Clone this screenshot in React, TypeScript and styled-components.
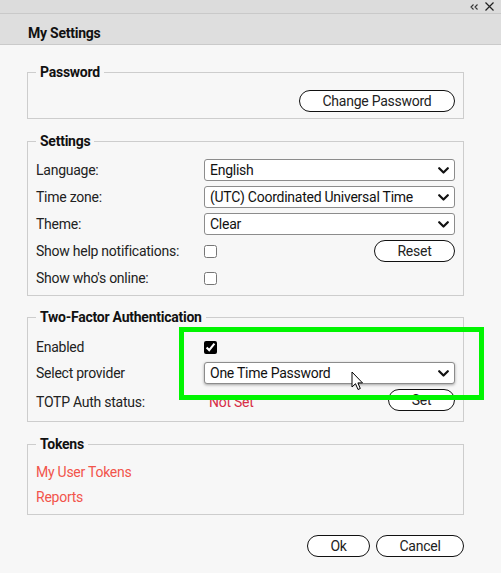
import React from "react";
import styled, { createGlobalStyle } from "styled-components";

const GlobalStyle = createGlobalStyle`
  html, body { margin: 0; padding: 0; background: #f7f7f7; }
  body { font-family: Roboto, "Noto Sans", Arial, sans-serif; }
  * { box-sizing: border-box; }
`;

const Window = styled.div`
  position: relative;
  width: 501px;
  height: 573px;
  overflow: hidden;
  background: #f7f7f7;
  color: #222;
  font-size: 14px;
  letter-spacing: -0.25px;
`;

const TopBar = styled.div`
  height: 14px;
  background: #dcdcdc;
  border-bottom: 1px solid #c9c9c9;
  display: flex;
  justify-content: flex-end;
  align-items: center;
  gap: 7px;
  padding-right: 7px;
`;

const Header = styled.div`
  height: 31px;
  background: #dedede;
  border-bottom: 1px solid #cacaca;
  padding: 11px 0 0 28px;
  font-weight: 700;
  font-size: 14px;
  line-height: 16px;
  color: #111;
`;

const Content = styled.div`
  padding: 19px 37px 0 27px;
  display: flex;
  flex-direction: column;
`;

const Group = styled.fieldset<{ $pt?: number; $pb?: number; $mt?: number }>`
  margin: ${(p) => p.$mt ?? 0}px 0 0 0;
  min-width: 0;
  border: 1px solid #cdcdcd;
  padding: ${(p) => p.$pt ?? 10}px 8px ${(p) => p.$pb ?? 6}px 8px;
`;

const Legend = styled.legend`
  padding: 0 4px;
  font-weight: 700;
  font-size: 14px;
  line-height: 16px;
  color: #111;
`;

const RightRow = styled.div`
  display: flex;
  justify-content: flex-end;
`;

const Rows = styled.div<{ $gap?: number }>`
  display: flex;
  flex-direction: column;
  gap: ${(p) => p.$gap ?? 5}px;
`;

const Row = styled.div<{ $mt?: number }>`
  display: grid;
  grid-template-columns: 168px 1fr;
  align-items: center;
  min-height: 22px;
  margin-top: ${(p) => p.$mt ?? 0}px;
`;

const Label = styled.span<{ $dy?: number }>`
  font-size: 14px;
  line-height: 16px;
  color: #222;
  padding-top: ${(p) => p.$dy ?? 0}px;
`;

const Cell = styled.div`
  display: flex;
  align-items: center;
  justify-content: space-between;
  min-width: 0;
`;

const SelectWrap = styled.div`
  position: relative;
  width: 100%;
`;

const Select = styled.select<{ $shadow?: boolean }>`
  appearance: none;
  -webkit-appearance: none;
  width: 100%;
  height: 22px;
  border: 1px solid #8c8c8c;
  border-radius: 3px;
  background: #fff;
  padding: 0 24px 0 5px;
  font-family: Roboto, "Noto Sans", Arial, sans-serif;
  font-size: 14px;
  letter-spacing: -0.25px;
  color: #111;
  box-shadow: ${(p) => (p.$shadow ? "0 1px 3px rgba(0,0,0,0.35)" : "none")};
  outline: none;
`;

const Chevron = styled.svg`
  position: absolute;
  right: 6px;
  top: 8px;
  pointer-events: none;
`;

const Check = styled.input.attrs({ type: "checkbox" })`
  margin: 0;
  width: 13px;
  height: 13px;
  accent-color: #000;
`;

const Pill = styled.button<{ $w: number }>`
  width: ${(p) => p.$w}px;
  height: 22px;
  border: 1px solid #111;
  border-radius: 11px;
  background: #fff;
  font-family: Roboto, "Noto Sans", Arial, sans-serif;
  font-size: 14px;
  letter-spacing: -0.25px;
  color: #222;
  padding: 0;
  line-height: 20px;
`;

const Status = styled.span`
  padding-left: 5px;
  padding-top: 3px;
  color: #d62d46;
  font-size: 14px;
  line-height: 16px;
`;

const LinkItem = styled.a`
  display: block;
  color: #f2544b;
  font-size: 14px;
  line-height: 20px;
  text-decoration: none;
`;

const Footer = styled.div`
  display: flex;
  justify-content: flex-end;
  gap: 6px;
  padding: 20px 37px 0 0;
`;

const Highlight = styled.div`
  position: absolute;
  left: 179px;
  top: 327px;
  width: 305px;
  height: 73px;
  border: 5px solid #00f500;
  pointer-events: none;
`;

const Cursor = styled.svg`
  position: absolute;
  left: 351px;
  top: 371px;
  pointer-events: none;
`;

const IconSvg = styled.svg`
  display: block;
`;

function Dropdown({ value, shadow }: { value: string; shadow?: boolean }) {
  return (
    <SelectWrap>
      <Select $shadow={shadow} defaultValue={value}>
        <option>{value}</option>
      </Select>
      <Chevron width="11" height="7" viewBox="0 0 11 7">
        <path d="M1.2 1.2 L5.5 5.5 L9.8 1.2" fill="none" stroke="#111" strokeWidth="2.2" strokeLinecap="round" strokeLinejoin="round" />
      </Chevron>
    </SelectWrap>
  );
}

export default function App() {
  return (
    <>
      <GlobalStyle />
      <Window>
        <TopBar>
          <IconSvg width="8" height="6" viewBox="0 0 8 6">
            <path d="M3.5 0.5 L1 3 L3.5 5.5 M7.5 0.5 L5 3 L7.5 5.5" fill="none" stroke="#333" strokeWidth="1.1" />
          </IconSvg>
          <IconSvg width="9" height="9" viewBox="0 0 9 9">
            <path d="M0.5 0.5 L8.5 8.5 M8.5 0.5 L0.5 8.5" fill="none" stroke="#222" strokeWidth="1.2" />
          </IconSvg>
        </TopBar>
        <Header>My Settings</Header>
        <Content>
          <Group $pt={10} $pb={6}>
            <Legend>Password</Legend>
            <RightRow>
              <Pill $w={156}>Change Password</Pill>
            </RightRow>
          </Group>

          <Group $mt={14} $pt={10} $pb={6}>
            <Legend>Settings</Legend>
            <Rows>
              <Row>
                <Label>Language:</Label>
                <Dropdown value="English" />
              </Row>
              <Row>
                <Label>Time zone:</Label>
                <Dropdown value="(UTC) Coordinated Universal Time" />
              </Row>
              <Row>
                <Label>Theme:</Label>
                <Dropdown value="Clear" />
              </Row>
              <Row>
                <Label>Show help notifications:</Label>
                <Cell>
                  <Check />
                  <Pill $w={81}>Reset</Pill>
                </Cell>
              </Row>
              <Row>
                <Label>Show who's online:</Label>
                <Cell>
                  <Check />
                </Cell>
              </Row>
            </Rows>
          </Group>

          <Group $mt={13} $pt={11} $pb={10}>
            <Legend>Two-Factor Authentication</Legend>
            <Rows $gap={4}>
              <Row>
                <Label>Enabled</Label>
                <Cell>
                  <Check defaultChecked />
                </Cell>
              </Row>
              <Row>
                <Label>Select provider</Label>
                <Dropdown value="One Time Password" shadow />
              </Row>
              <Row $mt={1}>
                <Label $dy={4}>TOTP Auth status:</Label>
                <Cell>
                  <Status>Not Set</Status>
                  <Pill $w={67}>Set</Pill>
                </Cell>
              </Row>
            </Rows>
          </Group>

          <Group $mt={14} $pt={10} $pb={7}>
            <Legend>Tokens</Legend>
            <Rows>
              <LinkItem href="#">My User Tokens</LinkItem>
              <LinkItem href="#">Reports</LinkItem>
            </Rows>
          </Group>
        </Content>
        <Footer>
          <Pill $w={63}>Ok</Pill>
          <Pill $w={88}>Cancel</Pill>
        </Footer>
        <Highlight />
        <Cursor width="13" height="20" viewBox="0 0 13 20">
          <path d="M1 1 L1 16 L4.5 12.7 L7 18.5 L9.3 17.5 L6.9 11.9 L11.5 11.9 Z" fill="#fff" stroke="#000" strokeWidth="1" strokeLinejoin="round" />
        </Cursor>
      </Window>
    </>
  );
}
